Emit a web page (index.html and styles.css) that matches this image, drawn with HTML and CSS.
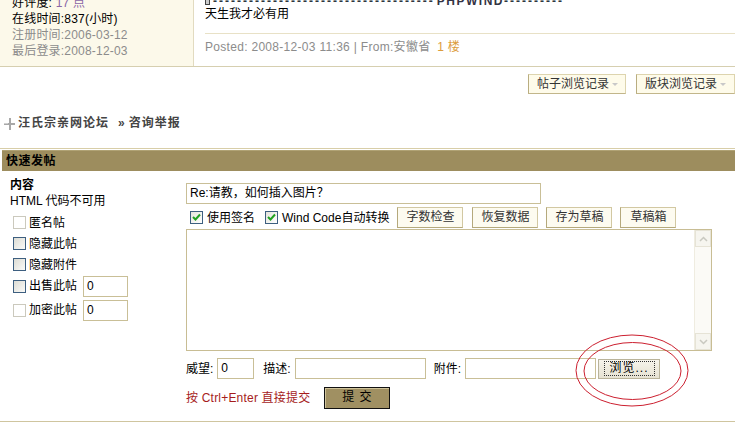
FILE: index.html
```html
<!DOCTYPE html>
<html lang="zh-CN">
<head>
<meta charset="utf-8">
<title>快速发帖</title>
<link rel="stylesheet" href="styles.css">
</head>
<body>
<div class="page">
  <div class="post">
    <div class="author">
      <div class="ln">好评度: <span class="rate">17 点</span></div>
      <div class="ln">在线时间:837(小时)</div>
      <div class="ln gray">注册时间:2006-03-12</div>
      <div class="ln gray">最后登录:2008-12-03</div>
    </div>
    <div class="content">
      <div class="sig"><span class="sigicon"></span>-------------------------------------<span class="pw">PHPWIND</span>----------</div>
      <div class="motto">天生我才必有用</div>
      <div class="sep"></div>
      <div class="meta">Posted: 2008-12-03 11:36 | From:安徽省 <span class="floor">1 楼</span></div>
    </div>
  </div>

  <div class="history">
    <span class="hbtn">帖子浏览记录<i class="arr"></i></span>
    <span class="hbtn wide">版块浏览记录<i class="arr"></i></span>
  </div>

  <div class="crumb">
    <svg class="crumbicon" width="11" height="13" viewBox="0 0 11 13"><rect x="0" y="6" width="11" height="2" fill="#a8a8a8"/><rect x="5" y="1" width="2" height="12" fill="#a8a8a8"/><rect x="0" y="6" width="4" height="1" fill="#d0d0d0"/></svg>
    <span class="crumbtext">汪氏宗亲网论坛</span><span class="crumbsep">»</span><span class="crumbtext">咨询举报</span>
  </div>

  <div class="quick">
    <div class="qhead">快速发帖</div>
    <div class="qbody">
      <div class="qleft">
        <div class="lbl">内容</div>
        <div class="note">HTML 代码不可用</div>
        <div class="opt first"><span class="cb dis"></span><span class="otext">匿名帖</span></div>
        <div class="opt"><span class="cb"></span><span class="otext">隐藏此帖</span></div>
        <div class="opt"><span class="cb"></span><span class="otext">隐藏附件</span></div>
        <div class="opt tall"><span class="cb"></span><span class="otext">出售此帖</span><span class="box small">0</span></div>
        <div class="opt tall gap"><span class="cb dis"></span><span class="otext">加密此帖</span><span class="box small">0</span></div>
      </div>
      <div class="qright">
        <div class="box title">Re:请教，如何插入图片？</div>
        <div class="tools">
          <span class="cb on first"><svg width="9" height="9" viewBox="0 0 9 9"><path d="M1 4 L3.5 6.5 L8 1.5" fill="none" stroke="#21a121" stroke-width="2"/></svg></span><span class="ttext">使用签名</span>
          <span class="cb on second"><svg width="9" height="9" viewBox="0 0 9 9"><path d="M1 4 L3.5 6.5 L8 1.5" fill="none" stroke="#21a121" stroke-width="2"/></svg></span><span class="ttext">Wind Code自动转换</span>
          <span class="btn b1">字数检查</span>
          <span class="btn">恢复数据</span>
          <span class="btn b3">存为草稿</span>
          <span class="btn b4">草稿箱</span>
        </div>
        <div class="editor">
          <div class="area"></div>
          <div class="scroll">
            <span class="sbtn"><svg width="9" height="6" viewBox="0 0 9 6"><path d="M1 5 L4.5 1.5 L8 5" fill="none" stroke="#c9c9c0" stroke-width="1.5"/></svg></span>
            <span class="track"></span>
            <span class="sbtn"><svg width="9" height="6" viewBox="0 0 9 6"><path d="M1 1 L4.5 4.5 L8 1" fill="none" stroke="#c9c9c0" stroke-width="1.5"/></svg></span>
          </div>
        </div>
        <div class="row3">
          <span class="rlabel">威望:</span><span class="box prestige">0</span>
          <span class="rlabel desc">描述:</span><span class="box descbox"></span>
          <span class="rlabel att">附件:</span><span class="box filebox"></span>
          <span class="browse"><span class="focus">浏览...</span></span>
        </div>
        <div class="row4">
          <span class="hint">按 Ctrl+Enter 直接提交</span>
          <span class="submit">提 交</span>
        </div>
      </div>
    </div>
    <svg class="rings" width="130" height="90" viewBox="0 0 130 90">
      <ellipse cx="65" cy="45.5" rx="56" ry="35.5" fill="none" stroke="#cc1f2f" stroke-width="1"/>
      <ellipse cx="65.5" cy="46" rx="48.5" ry="28.5" fill="none" stroke="#cc1f2f" stroke-width="1"/>
    </svg>
  </div>
</div>
</body>
</html>
```

FILE: styles.css
```css
* { box-sizing: border-box; }
html, body { margin: 0; padding: 0; background: #fff; }
body {
  font-family: "Liberation Sans", Arial, "Noto Sans CJK SC", sans-serif;
  font-size: 12px;
  line-height: 16px;
  color: #000;
  overflow: hidden;
}
.page { width: 735px; height: 435px; overflow: hidden; padding-top: 1px; }

/* previous post */
.post {
  display: flex;
  margin-top: -9px;
  height: 75px;
  border-bottom: 1px solid #d6cfb0;
}
.author {
  width: 194px;
  flex: none;
  background: #fcf9ea;
  border-right: 1px solid #e2dbc0;
  padding: 3px 0 0 12px;
  letter-spacing: 0.2px;
}
.ln { height: 16px; white-space: nowrap; }
.gray { color: #8c8c8c; }
.rate { color: #8a66a6; }
.content { flex: 1; padding-left: 11px; overflow: hidden; }
.sig {
  height: 14px;
  padding-top: 4px;
  line-height: 10px;
  font-weight: bold;
  color: #2e3640;
  white-space: nowrap;
  overflow: hidden;
  letter-spacing: 2px;
}
.sigicon {
  display: inline-block;
  width: 5px;
  height: 7px;
  border: 1px solid #444;
  background: #ccc;
  margin-right: 3px;
  vertical-align: 0;
}
.pw { letter-spacing: 1.5px; color: #334; margin-left: 2px; }
.motto { height: 16px; }
.sep { margin-top: 11px; border-top: 1px solid #e8e1c6; }
.meta { padding-top: 5px; color: #8c8c8c; white-space: nowrap; letter-spacing: 0.3px; }
.floor { color: #dc9c3c; margin-left: 3px; }

/* history buttons */
.history {
  display: flex;
  justify-content: flex-end;
  gap: 10px;
  margin-top: 7px;
  height: 20px;
}
.hbtn {
  width: 98px;
  height: 20px;
  border: 1px solid #ddd4ae;
  border-left-color: #b9ad80;
  border-bottom-color: #c2b68a;
  background: #fefbea;
  padding-left: 8px;
  line-height: 18px;
  color: #333;
  white-space: nowrap;
}
.hbtn.wide { width: 99px; }
.arr {
  display: inline-block;
  width: 0; height: 0;
  border-left: 3px solid transparent;
  border-right: 3px solid transparent;
  border-top: 3px solid #c8c8c8;
  margin-left: 3px;
  vertical-align: middle;
}

/* breadcrumb */
.crumb {
  margin-top: 21px;
  height: 16px;
  display: flex;
  align-items: center;
  padding-left: 4px;
  color: #444;
  font-weight: bold;
}
.crumbicon { margin-right: 3px; }
.crumbtext { letter-spacing: 1px; }
.crumbsep { margin: 0 4px 0 9px; }

/* quick post */
.quick {
  position: relative;
  margin-top: 17px;
  border-top: 1px solid #d8cea8;
  border-bottom: 1px solid #cfc59f;
}
.qhead {
  height: 21px;
  margin: 1px 0 0 2px;
  background: #9d8d5e;
  border-top: 1px solid #b0a274;
  padding-left: 4px;
  line-height: 20px;
  font-weight: bold;
  letter-spacing: 0.5px;
}
.qbody { display: flex; height: 250px; }
.qleft { width: 186px; flex: none; padding: 6px 0 0 10px; }
.lbl { font-weight: bold; height: 16px; }
.note { height: 16px; }
.opt { display: flex; align-items: center; height: 21px; }
.opt.first { margin-top: 3px; }
.opt.tall { height: 22px; }
.opt.gap { margin-top: 2px; }
.opt .cb { margin-left: 3px; margin-right: 3px; }
.otext { white-space: nowrap; }

.cb {
  display: inline-flex;
  align-items: center;
  justify-content: center;
  width: 13px;
  height: 13px;
  flex: none;
  border: 1px solid #3d5f80;
  background: linear-gradient(135deg, #dcdcd4, #fafaf8);
}
.cb.dis { border-color: #cbc9bd; background: #fff; }
.cb.on { background: linear-gradient(135deg, #e4e4dc, #fff); }

.box {
  display: inline-block;
  height: 21px;
  border: 1px solid #c9bf97;
  background: #fff;
  padding-left: 3px;
  line-height: 19px;
  white-space: nowrap;
}
.box.small { width: 45px; margin-left: 6px; }

.qright { flex: 1; padding-top: 12px; }
.title { display: block; width: 355px; }
.tools {
  display: flex;
  align-items: center;
  height: 21px;
  margin-top: 3px;
  white-space: nowrap;
}
.tools .cb.first { margin-left: 4px; }
.tools .cb.second { margin-left: 10px; }
.ttext { margin-left: 4px; }
.btn {
  display: inline-block;
  width: 66px;
  height: 21px;
  margin-left: 9px;
  border: 1px solid #d2c8a2;
  border-left-color: #b5a97c;
  border-bottom-color: #b5a97c;
  background: #fdfbf0;
  line-height: 19px;
  text-align: center;
  color: #333;
}
.btn.b1 { margin-left: 8px; }
.btn.b3 { margin-left: 8px; }
.btn.b4 { margin-left: 8px; width: 56px; }

.editor {
  display: flex;
  width: 526px;
  height: 122px;
  margin-top: 1px;
  border: 1px solid #c8bd94;
  background: #fff;
}
.area { flex: 1; }
.scroll {
  width: 17px;
  display: flex;
  flex-direction: column;
  background: #fbfaf6;
  border-left: 1px solid #efece0;
}
.sbtn {
  height: 17px;
  display: flex;
  align-items: center;
  justify-content: center;
  border: 1px solid #e6e3d6;
  background: #f6f5ef;
}
.track { flex: 1; }

.row3 {
  display: flex;
  align-items: center;
  height: 21px;
  margin-top: 7px;
  white-space: nowrap;
}
.rlabel { margin-right: 4px; }
.prestige { width: 37px; }
.desc { margin-left: 9px; }
.descbox { width: 131px; }
.att { margin-left: 8px; }
.filebox { width: 131px; }
.browse {
  display: inline-flex;
  align-items: center;
  justify-content: center;
  width: 62px;
  height: 20px;
  margin-left: 2px;
  border: 1px solid #b9b39a;
  background: linear-gradient(#f6f4ec, #e6e2d2);
}
.focus {
  border: 1px dotted #333;
  padding: 0 5px;
  line-height: 13px;
  letter-spacing: 1px;
}

.row4 {
  display: flex;
  align-items: center;
  height: 22px;
  margin-top: 8px;
}
.hint { color: #a61c1c; white-space: nowrap; letter-spacing: 0.2px; }
.submit {
  width: 66px;
  height: 22px;
  margin-left: 14px;
  border: 1px solid #111;
  box-shadow: inset 1px 1px 0 #cfc39a;
  background: #a09062;
  text-align: center;
  line-height: 19px;
  letter-spacing: 1px;
}

.rings {
  position: absolute;
  left: 567px;
  top: 176px;
}
```
